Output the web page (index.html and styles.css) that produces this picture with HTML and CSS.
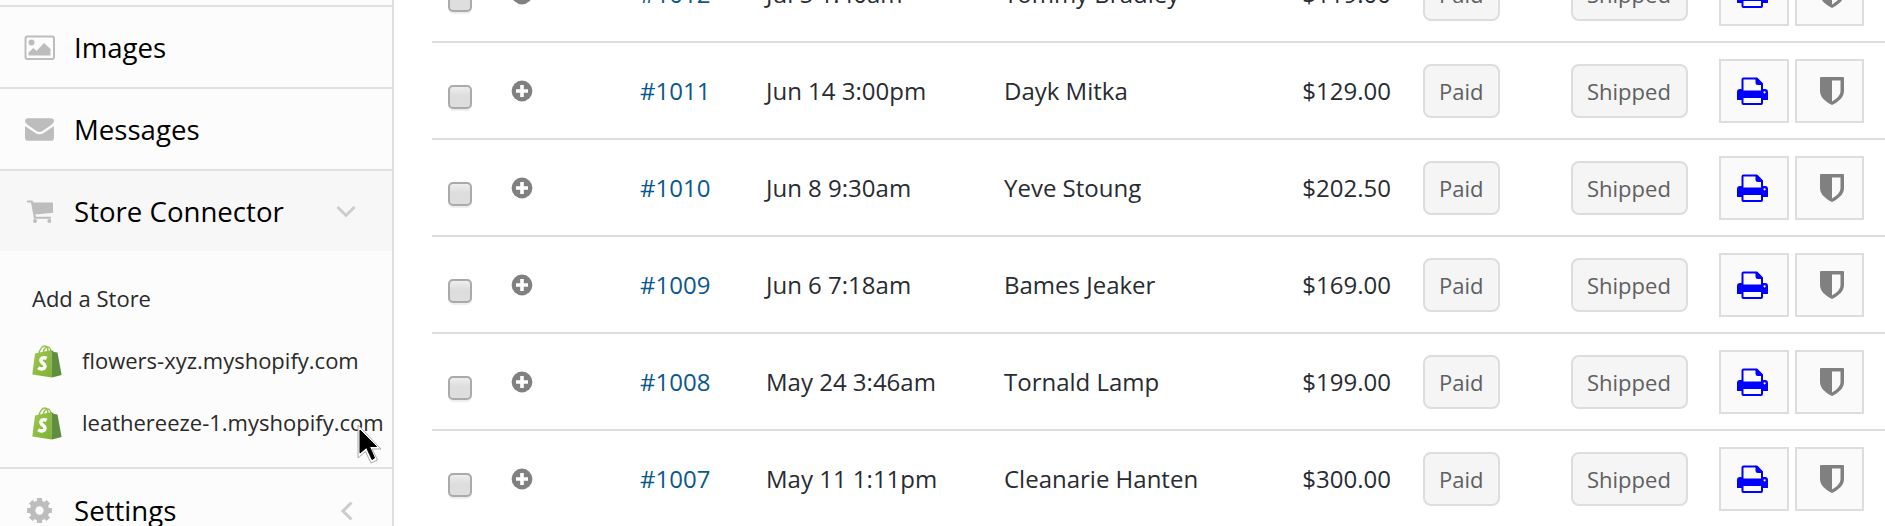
FILE: index.html
```html
<!DOCTYPE html>
<html lang="en">
<head>
<meta charset="utf-8">
<title>Orders</title>
<link rel="stylesheet" href="styles.css">
</head>
<body>
<svg class="defs" aria-hidden="true">
  <defs>
    <linearGradient id="front" x1="0" y1="0" x2="1" y2="1"><stop offset="0" stop-color="#9cc94b"/><stop offset="1" stop-color="#80b03a"/></linearGradient>
    <symbol id="bag" viewBox="0 0 30 33">
      <path d="M7 9C7.500 4 10.500 1 13 1c2.500 0 3 3 3 6M11 8c.5-4 3-6 4.500-6C18 2 19 5 19 7" fill="none" stroke="#95bf47" stroke-width="1.400"/>
      <path d="M3 8.500 19.500 5 20 32.500.3 29.500Z" fill="url(#front)"/>
      <path d="M19.500 5 22 7l3.500.5L29.600 30 20 32.500Z" fill="#5e8e3e"/>
      <path d="M14.600 13.400c-2.400-1.300-5.700-.6-5.700 2 0 2.900 4.400 2.800 4.100 5.900-.3 2.800-3.900 3.500-6.800 1.300" fill="none" stroke="#fff" stroke-width="3.500"/>
    </symbol>
    <symbol id="plus" viewBox="0 0 22 22">
      <circle cx="11" cy="11" r="10.400" fill="#808080"/>
      <path d="M11 5v12M5 11h12" stroke="#fff" stroke-width="3.600"/>
    </symbol>
    <symbol id="printer" viewBox="0 0 31 28">
      <path d="M5.500 14V2.500Q5.500 1.500 6.500 1.500H19L25 7.500V14" fill="#fafafa" stroke="#00f" stroke-width="2"/>
      <path d="M18.500 .8H20.500L26 6.500V8H21Q18.500 8 18.500 5.500Z" fill="#00f"/>
      <path d="M0 15Q0 12 3 12H5V13.500H25.500V12H28Q31 12 31 15V22.500Q31 23 30.500 23H.5Q0 23 0 22.500Z" fill="#00f"/>
      <rect x="5.500" y="20" width="19.500" height="7" rx=".8" fill="#fafafa" stroke="#00f" stroke-width="2"/>
      <circle cx="27.600" cy="15.300" r="1.100" fill="#fafafa"/>
    </symbol>
    <symbol id="shield" viewBox="0 0 24 28">
      <path d="M0 1Q0 0 1 0h22Q24 0 24 1V14c0 6-5 10.500-12 14C5 24.500 0 20 0 14Z" fill="#808080"/>
      <path d="M12 3.500h8.500V14c0 4-3.500 7.500-8.500 10.500Z" fill="#fafafa"/>
    </symbol>
  </defs>
</svg>
<div class="app">
  <nav class="sidebar">
    <div class="item stub"></div>
    <div class="item">
      <svg class="icon" viewBox="0 0 31 25"><rect x="1.500" y="1.500" width="28.500" height="22.500" rx="2" fill="none" stroke="#bdbdbd" stroke-width="2"/><circle cx="7.500" cy="7.500" r="3" fill="#bdbdbd"/><path d="M4.500 20.500V17.500L9.500 13l3 3 7.500-8L26.500 14v6.500Z" fill="#bdbdbd"/></svg>
      <span>Images</span>
    </div>
    <div class="item">
      <svg class="icon" viewBox="0 0 30 24"><path d="M1 4Q1 1 4 1H26Q29 1 29 4 29 6 26 8L18 13.500Q15 15.500 12 13.500L4 8Q1 6 1 4ZM1 8.500 11 15.300Q15 18 19 15.300L29 8.500V20Q29 23 26 23H4Q1 23 1 20Z" fill="#bdbdbd"/></svg>
      <span>Messages</span>
    </div>
    <div class="item active">
      <svg class="icon" viewBox="0 0 31 25"><path d="M3 1.500H8Q8.700 1.500 9 2.500L9.300 3.500H29V13.700L11.300 15.600 11.800 17.800H27V19.800H10L7 3.500H3Z" fill="#bdbdbd"/><circle cx="11" cy="22" r="2" fill="#bdbdbd"/><circle cx="25.300" cy="22" r="2" fill="#bdbdbd"/></svg>
      <span>Store Connector</span>
      <svg class="chevron" viewBox="0 0 20 20"><path d="M1.500 6 10 14.500l8.500-8.500" fill="none" stroke="#ccc" stroke-width="3"/></svg>
    </div>
    <div class="submenu">
      <a class="add">Add a Store</a>
      <a class="store"><svg class="bag"><use href="#bag"/></svg><span>flowers-xyz.myshopify.com</span></a>
      <a class="store"><svg class="bag"><use href="#bag"/></svg><span>leathereeze-1.myshopify.com</span></a>
    </div>
    <div class="item settings">
      <svg class="icon" viewBox="0 0 30 24"><circle cx="15" cy="12" r="6.800" fill="none" stroke="#bdbdbd" stroke-width="5.600"/><path d="M15 0v5M15 19v5M3 12h5M22 12h5M6.500 3.500 10 7M20 17l3.500 3.500M6.500 20.500 10 17M20 7l3.500-3.500" stroke="#bdbdbd" stroke-width="5"/></svg>
      <span>Settings</span>
      <svg class="chevron" viewBox="0 0 20 20"><path d="M15.500 2.500 7 11l8.500 8.500" fill="none" stroke="#ccc" stroke-width="3"/></svg>
    </div>
    <svg class="cursor" viewBox="0 0 25 40"><path d="M1 1V34L8.500 27.500 14 39 20.500 36 15 25H24Z" fill="#fff" stroke="#aaa"/><path d="M3 6V29L9.500 23.500 15 35.500 17.500 34 12.500 22.500H19.500Z" fill="#000" stroke="#000"/></svg>
  </nav>
  <main class="orders" id="orders"></main>
</div>
<script src="orders.js"></script>
</body>
</html>
```
FILE: styles.css
```css
* { box-sizing: border-box; }
body { margin: 0; background: #fff; font-family: "Open Sans", sans-serif; overflow: hidden; }
.defs { position: absolute; width: 0; height: 0; }
.app { display: flex; width: 1885px; height: 526px; overflow: hidden; }
.sidebar { position: relative; flex: none; width: 394px; border-right: 2px solid #e0e0e0; background: #fcfcfc; }
.item { display: flex; align-items: center; height: 82px; padding: 0 36px 0 24px; border-bottom: 2px solid #e0e0e0; font-size: 27.600px; color: #000; white-space: nowrap; }
.item.stub { height: 7px; }
.item.active { height: 80px; border-bottom: 0; background: #f7f7f7; }
.item .icon { width: 31px; height: 25px; margin-right: 19px; flex: none; }
.item span { padding-bottom: 1px; }
.chevron { width: 20px; height: 20px; margin-left: auto; }
.submenu { height: 218px; padding: 16px 0 0 32px; border-bottom: 2px solid #e0e0e0; font-size: 22px; color: #2a2a2a; }
.add, .store { display: flex; align-items: center; height: 62px; white-space: nowrap; }
.bag { width: 30px; height: 33px; margin: 3px 20px 0 0; flex: none; }
.settings { border-bottom: 0; }
.cursor { position: absolute; left: 357px; top: 424px; width: 25px; height: 40px; }
.orders { flex: 1; margin-left: 38px; margin-top: -54px; font-size: 24px; color: #282c31; }
.row { display: grid; grid-template-columns: 63px 129px 126px 238px 419px 148px 148px 76px 1fr; align-items: center; height: 97px; padding-left: 16px; border-bottom: 2px solid #ddd; white-space: nowrap; }
.person { display: flex; justify-content: space-between; padding-right: 32px; }
.check { width: 24px; height: 24px; margin-top: 13px; border: 2px solid #aaa; border-radius: 5px; background: linear-gradient(#eee, #ddd 45%, #dedede); box-shadow: 0 2px 1px #eee; }
.plus { width: 22px; height: 22px; margin-top: 1px; }
.num { color: #0b588c; }
.badge { justify-self: start; height: 54px; padding: 0 15px 0 14px; border: 2px solid #ddd; border-radius: 8px; background: #f5f5f5; color: #606060; font-size: 22px; line-height: 50px; }
.btn { display: flex; align-items: center; justify-content: center; width: 70px; height: 64px; border: 2px solid #ddd; background: #fafafa; }
.btn.print { padding-right: 3px; }
.btn.protect { width: 69px; padding-left: 5px; }
.printer { width: 31px; height: 28px; }
.shield { width: 24px; height: 28px; }
```
FILE: orders.js
```js
const orders = [
  ["#1012", "Jul 5 1:40am", "Tommy Bradley", "$119.00"],
  ["#1011", "Jun 14 3:00pm", "Dayk Mitka", "$129.00"],
  ["#1010", "Jun 8 9:30am", "Yeve Stoung", "$202.50"],
  ["#1009", "Jun 6 7:18am", "Bames Jeaker", "$169.00"],
  ["#1008", "May 24 3:46am", "Tornald Lamp", "$199.00"],
  ["#1007", "May 11 1:11pm", "Cleanarie Hanten", "$300.00"]
];
document.getElementById("orders").innerHTML = orders.map(([num, date, name, price]) => `
  <div class="row">
    <span class="check"></span>
    <svg class="plus"><use href="#plus"/></svg>
    <a class="num">${num}</a><span>${date}</span>
    <div class="person"><span>${name}</span><span>${price}</span></div>
    <span class="badge">Paid</span><span class="badge">Shipped</span>
    <span class="btn print"><svg class="printer"><use href="#printer"/></svg></span>
    <span class="btn protect"><svg class="shield"><use href="#shield"/></svg></span>
  </div>`).join("");
```
